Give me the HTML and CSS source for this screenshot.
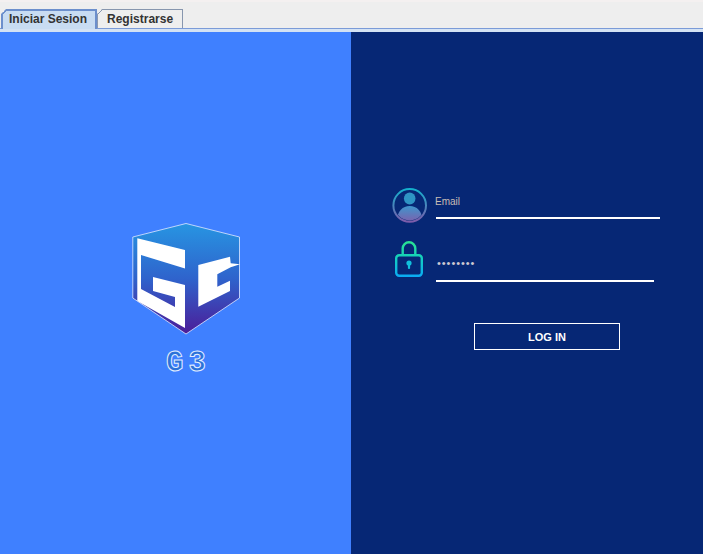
FILE: index.html
```html
<!DOCTYPE html>
<html lang="en">
<head>
  <meta charset="UTF-8" />
  <title>Login</title>
  <link rel="stylesheet" href="styles.css">
</head>
<body>

  <div class="tabs">
    <div class="tab active">Iniciar Sesion</div>
    <div class="tab">Registrarse</div>
  </div>

  <div class="main">
    <div class="left">
      <svg class="logo" width="112" height="114" viewBox="131 222 112 114">
        <defs>
          <linearGradient id="cube" x1="0" y1="0" x2="0" y2="1">
            <stop offset="0" stop-color="#2795e2" />
            <stop offset="0.5" stop-color="#2f63cc" />
            <stop offset="1" stop-color="#4c1c98" />
          </linearGradient>
        </defs>
        <polygon points="186,223.5 239.5,237 239.5,298 186,334 132.8,298 132.8,237" fill="url(#cube)" stroke="#dfe9ff" stroke-width="0.8" />
        <polygon points="137.3,238.3 185,250 185,268.5 141,255 141,289 175,307 175,297 153,291 153,277 185,285 185,328 137.3,301" fill="#fff" />
        <polygon points="198.3,265 230,256.7 230.7,263.3 240,264.3 230.7,267.3 217.3,274.3 217.3,286.7 230,280.7 230,291 198.3,306.7" fill="#fff" />
      </svg>
      <div class="wordmark">G3</div>
    </div>

    <div class="right">
      <div class="field email-field">
        <svg class="icon" width="36" height="36" viewBox="0 0 36 36">
          <defs>
            <linearGradient id="ring" x1="0" y1="0" x2="0" y2="1">
              <stop offset="0" stop-color="#14b0cc" />
              <stop offset="1" stop-color="#7d5cab" />
            </linearGradient>
            <linearGradient id="person" x1="0" y1="0" x2="0" y2="1">
              <stop offset="0" stop-color="#3f95cc" />
              <stop offset="1" stop-color="#8559a9" />
            </linearGradient>
            <clipPath id="inner"><circle cx="17.7" cy="17.4" r="15" /></clipPath>
          </defs>
          <circle cx="17.7" cy="17.4" r="16.3" fill="none" stroke="url(#ring)" stroke-width="2" />
          <g clip-path="url(#inner)">
            <ellipse cx="17.7" cy="10.5" rx="5.8" ry="6" fill="#2f94c4" />
            <path d="M4.5 36 C4.5 24 10 18 17.7 18 C25.4 18 31 24 31 36 Z" fill="url(#person)" />
          </g>
        </svg>
        <div class="input">
          <span class="label">Email</span>
        </div>
      </div>

      <div class="field pass-field">
        <svg class="icon" width="36" height="38" viewBox="0 0 36 38">
          <defs>
            <linearGradient id="lock" gradientUnits="userSpaceOnUse" x1="0" y1="0" x2="0" y2="36">
              <stop offset="0" stop-color="#2be390" />
              <stop offset="0.45" stop-color="#14d0bc" />
              <stop offset="1" stop-color="#0aaaf5" />
            </linearGradient>
          </defs>
          <path d="M10.7 14 V7.5 a6.3 6.3 0 0 1 12.6 0 V14" fill="none" stroke="url(#lock)" stroke-width="2.4" />
          <rect x="4.2" y="14.2" width="25.6" height="20.6" rx="3" fill="none" stroke="url(#lock)" stroke-width="2.4" />
          <circle cx="17" cy="22" r="2.6" fill="#12c0dc" />
          <rect x="15.9" y="22" width="2.2" height="6" rx="1" fill="#12c0dc" />
        </svg>
        <div class="input short">
          <span class="dots">••••••••</span>
        </div>
      </div>

      <button class="login">LOG IN</button>
    </div>
  </div>

</body>
</html>
```

FILE: styles.css
```css
* {
  box-sizing: border-box;
}

html, body {
  height: 100%;
}

body {
  margin: 0;
  display: flex;
  flex-direction: column;
  font-family: 'Liberation Sans', Arial, sans-serif;
  background-color: #eee;
}

.tabs {
  height: 32px;
  padding: 7px 0 0 1px;
  display: flex;
  align-items: flex-start;
  background: #eee;
  border-top: 2px solid #f4f0f0;
  border-bottom: 3px solid #d3e2f4;
  box-shadow: inset 0 -1px 0 #7b9bd8;
}

.tab {
  height: 19px;
  padding: 2px 9px 0 9px;
  font-size: 12px;
  font-weight: bold;
  color: #333;
  background: linear-gradient(135deg, transparent 3.6px, #8796ae 3.6px, #8796ae 4.8px, #eee 4.8px);
  background-origin: border-box;
  border: 1px solid #8796ae;
  border-bottom: none;
  clip-path: polygon(5px 0, 100% 0, 100% 100%, 0 100%, 0 5px);
}

.tab.active {
  height: 20px;
  padding: 1px 8px 0 6px;
  background: linear-gradient(135deg, transparent 3.6px, #6c8fcc 3.6px, #6c8fcc 5px, #c8dcf2 5px);
  background-origin: border-box;
  border: 2px solid #6c8fcc;
  border-bottom: none;
}

.main {
  flex: 1;
  display: grid;
  grid-template-columns: 351px 1fr;
}

.left {
  background: #3f80ff;
  padding-top: 190px;
  display: flex;
  flex-direction: column;
  align-items: center;
}

.logo {
  display: block;
  margin-left: 23px;
}

.wordmark {
  margin-top: 13px;
  margin-left: 26px;
  font-family: 'Liberation Mono', monospace;
  font-weight: bold;
  font-size: 29px;
  line-height: 30px;
  letter-spacing: 5px;
  color: #2c72d8;
  -webkit-text-stroke: 1px #e4eeff;
}

.right {
  background: #062775;
  padding: 156px 0 0 41px;
}

.field {
  display: flex;
  gap: 8px;
}

.icon {
  display: block;
  flex: none;
}

.email-field {
  height: 36px;
}

.pass-field {
  height: 42px;
  margin-top: 17px;
}

.input {
  width: 224px;
  height: 31px;
  border-bottom: 2px solid #fff;
  display: flex;
  align-items: flex-end;
}

.input.short {
  width: 218px;
  height: 41px;
}

.label {
  margin-left: -1px;
  padding-bottom: 10px;
  font-size: 10px;
  color: #c8bdb4;
}

.dots {
  padding: 0 0 12px 1px;
  font-size: 11px;
  line-height: 10px;
  letter-spacing: 0.95px;
  color: #cdc9d2;
}

.login {
  display: block;
  width: 146px;
  height: 27px;
  margin: 40px 0 0 82px;
  padding: 0;
  background: transparent;
  border: 1px solid #fff;
  font-family: 'Liberation Sans', Arial, sans-serif;
  font-size: 11px;
  font-weight: bold;
  color: #fff;
}
```
